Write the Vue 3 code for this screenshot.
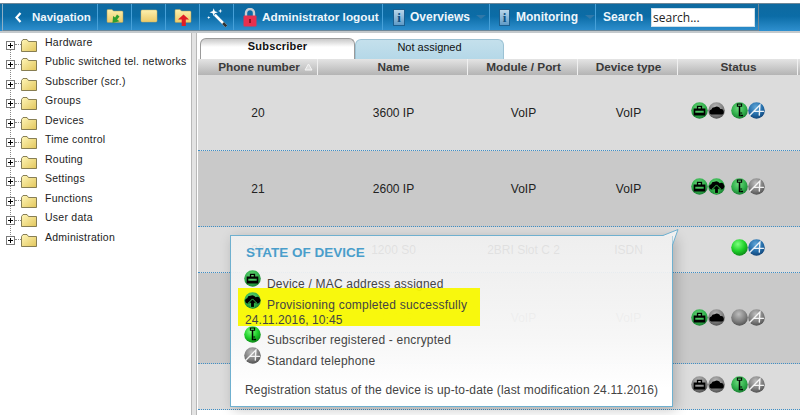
<script setup>
const tree = ['Hardware','Public switched tel. networks','Subscriber (scr.)','Groups','Devices','Time control','Routing','Settings','Functions','User data','Administration']

const columns = [
  { label: 'Phone number', cls: 'c-phone', sort: true },
  { label: 'Name', cls: 'c-name' },
  { label: 'Module / Port', cls: 'c-mod' },
  { label: 'Device type', cls: 'c-type' },
  { label: 'Status', cls: 'c-status' }
]

const rows = [
  { phone: '20', name: '3600 IP', mod: 'VoIP', type: 'VoIP', cls: 'r1', icons: [['green','case'],['grey','cloud'],['green','key'],['blue','phone']] },
  { phone: '21', name: '2600 IP', mod: 'VoIP', type: 'VoIP', cls: 'r2', icons: [['green','case'],['green','upload'],['green','key'],['grey','phone']] },
  { phone: '22', name: '1200 S0', mod: '2BRI Slot C 2', type: 'ISDN', cls: 'r3', icons: [null,null,['bright',''],['blue','phone']] },
  { phone: '', name: '1400 IP', mod: 'VoIP', type: 'VoIP', cls: 'r4', icons: [['green','case'],['grey','cloud'],['grey',''],['grey','phone']] },
  { phone: '', name: '', mod: '', type: '', cls: 'r5', icons: [['grey','case'],['grey','cloud'],['green','key'],['grey','phone']] }
]
</script>

<template>
  <div class="page">
    <svg width="0" height="0" class="defs">
      <defs>
        <radialGradient id="b-green" cx="45%" cy="35%" r="70%">
          <stop offset="0" stop-color="#6fdc7f"/><stop offset=".6" stop-color="#2fae4a"/><stop offset="1" stop-color="#17752f"/>
        </radialGradient>
        <radialGradient id="b-bright" cx="40%" cy="30%" r="75%">
          <stop offset="0" stop-color="#7dff7d"/><stop offset=".55" stop-color="#1fd02a"/><stop offset="1" stop-color="#0a8015"/>
        </radialGradient>
        <radialGradient id="b-grey" cx="45%" cy="30%" r="75%">
          <stop offset="0" stop-color="#bdbdbd"/><stop offset=".6" stop-color="#7e7e7e"/><stop offset="1" stop-color="#4a4a4a"/>
        </radialGradient>
        <radialGradient id="b-blue" cx="45%" cy="30%" r="75%">
          <stop offset="0" stop-color="#5fa6d8"/><stop offset=".6" stop-color="#226aa6"/><stop offset="1" stop-color="#123f70"/>
        </radialGradient>
        <linearGradient id="folder" x1="0" y1="0" x2="1" y2="1">
          <stop offset="0" stop-color="#fff6b8"/><stop offset="1" stop-color="#e2c65c"/>
        </linearGradient>
        <linearGradient id="tool-folder" x1="0" y1="0" x2="0" y2="1">
          <stop offset="0" stop-color="#fdf0ae"/><stop offset="1" stop-color="#ecca68"/>
        </linearGradient>
        <symbol id="g-case" viewBox="0 0 16 16">
          <path d="M2.500 6h3V3.500h5V6h3v6.800h-11z M6.800 4.600V6h2.400V4.600z M4 8.200v1.800h8V8.200z" fill="#000" fill-rule="evenodd"/>
        </symbol>
        <symbol id="g-cloud" viewBox="0 0 16 16">
          <path d="M3.200 11.800a2.400 2.400 0 0 1 0-4.700 3 3 0 0 1 3-2.100 3.500 3.500 0 0 1 5.400 1.700 2.600 2.600 0 0 1 1.200 5.100z" fill="#000"/>
        </symbol>
        <symbol id="g-upload" viewBox="0 0 16 16">
          <path d="M3 10.800a2.500 2.500 0 0 1 0-4.900 3 3 0 0 1 3-2.300 3.600 3.600 0 0 1 5 1.300 3 3 0 0 1 2.300 5.900z" fill="#000"/>
          <path d="M8 6.500 12 10.500H9.800V14.500H6.200V10.500H4z" fill="#000" stroke="#38c04c" stroke-width=".9"/>
        </symbol>
        <symbol id="g-key" viewBox="0 0 16 16">
          <path d="M5.500 1.500h5v3H8.700v9H7.300v-9H5.500z M6.500 2.400v1.200h3V2.400z" fill="#000" fill-rule="evenodd"/>
          <path d="M8.700 9.800h1.800v1h-1.800z M8.700 11.900h2.600v1.400H8.700z" fill="#000"/>
        </symbol>
        <symbol id="g-phone" viewBox="0 0 16 16">
          <path d="M1.500 12.800 11.200 2.800 10.600 12.800M5.500 8.800H15" fill="none" stroke="#fff" stroke-width="1.300" opacity=".9"/>
        </symbol>
      </defs>
    </svg>

    <nav class="toolbar">
      <div class="tools">
        <div class="tool nav-item">
          <svg width="7" height="11" viewBox="0 0 7 11"><path d="M5.500 1 1.500 5.500 5.500 10" fill="none" stroke="#fff" stroke-width="2.200"/></svg>
          <span>Navigation</span>
        </div>
        <div class="tool icon-item">
          <svg width="20" height="18" viewBox="0 0 20 18"><path d="M2 2.500q0-1 1-1h4l1.500 1.500h8.500q1 0 1 1v9.500q0 1-1 1H3q-1 0-1-1z" fill="url(#tool-folder)" stroke="#a99a5a" stroke-width=".5"/><path d="M12 6.500l2.500 2-2.400 3 2.400 1.800-7 1.700.6-7 2 1.500z" fill="#2f9e2f"/></svg>
        </div>
        <div class="tool icon-item">
          <svg width="20" height="18" viewBox="0 0 20 18"><rect x="2" y="2" width="16" height="12" rx="1.200" fill="url(#tool-folder)" stroke="#c9b56c" stroke-width=".5"/></svg>
        </div>
        <div class="tool icon-item">
          <svg width="20" height="18" viewBox="0 0 20 18"><path d="M2 2.500q0-1 1-1h4l1.500 1.500h8.500q1 0 1 1v9.500q0 1-1 1H3q-1 0-1-1z" fill="url(#tool-folder)" stroke="#a99a5a" stroke-width=".5"/><path d="M10.500 6.500l5.500 5h-3.200V18H8.700v-6.500H5z" fill="#e01b24"/></svg>
        </div>
        <div class="tool icon-item">
          <svg width="22" height="22" viewBox="0 0 20 20"><path d="M8 8 18.500 18.500" stroke="#fff" stroke-width="2.400"/><path d="M15.500 15.500 18.500 18.500" stroke="#333" stroke-width="2.400"/><path d="M7 2l1 2.700 2.800.9-2.800 1L7 9.300 6 6.600l-2.800-1 2.800-.9zM13 2.500l.5 1.500 1.500.5-1.500.5-.5 1.500-.5-1.500-1.500-.5 1.500-.5zM2.500 9l.4 1.100L4 10.500l-1.100.4-.4 1.100-.4-1.100L1 10.500l1.100-.4z" fill="#fff"/></svg>
        </div>
        <div class="tool logout">
          <svg width="14" height="19" viewBox="0 0 14 19"><path d="M3 8V5a4 4 0 0 1 8 0v3" fill="none" stroke="#c9ccd2" stroke-width="2.400"/><rect x=".5" y="7.500" width="13" height="11" rx="1" fill="#e6304f"/><rect x="6" y="11" width="2" height="4" fill="#8d1528"/></svg>
          <span>Administrator logout</span>
        </div>
        <div class="tool menu m-over">
          <span class="info">i</span><span>Overviews</span><i class="caret"></i>
        </div>
        <div class="tool menu m-mon">
          <span class="info">i</span><span>Monitoring</span><i class="caret"></i>
        </div>
        <div class="tool search">
          <span>Search</span>
          <input class="search-box" value="search..." />
        </div>
      </div>
    </nav>

    <div class="body">
      <aside class="sidebar">
        <ul class="tree">
          <li v-for="item in tree" :key="item" class="tree-row">
            <span class="plus"></span><span class="dash"></span>
            <svg class="folder" width="16" height="13" viewBox="0 0 16 13"><path d="M.5 12.500V2.500l1.500-2h4l1.500 2h8v10z" fill="url(#folder)" stroke="#6b6238" stroke-width=".8"/></svg>
            <span class="tree-label">{{ item }}</span>
          </li>
        </ul>
      </aside>
      <div class="splitter"></div>
      <main class="content">
        <div class="tabs">
          <div class="tab active">Subscriber</div>
          <div class="tab inactive">Not assigned</div>
        </div>
        <div class="thead">
          <div v-for="c in columns" :key="c.label" class="th" :class="[c.cls, { 'th-sort': c.sort }]">
            {{ c.label }}<svg v-if="c.sort" class="sort" width="9" height="8" viewBox="0 0 9 8"><path d="M4.500 1 8 7H1z" fill="#ddd" stroke="#f4f4f4" stroke-width="1"/></svg>
          </div>
        </div>
        <div v-for="(r, i) in rows" :key="i" class="row" :class="r.cls">
          <div class="td c-phone">{{ r.phone }}</div>
          <div class="td c-name">{{ r.name }}</div>
          <div class="td c-mod">{{ r.mod }}</div>
          <div class="td c-type">{{ r.type }}</div>
          <div class="td c-status">
            <div class="status">
              <div v-for="(ic, k) in r.icons" :key="k" class="slot" :class="{ 'slot-gap': k === 2 }">
                <svg v-if="ic" width="17" height="17" viewBox="0 0 16 16">
                  <circle cx="8" cy="8" r="7.800" :fill="`url(#b-${ic[0]})`"/>
                  <use v-if="ic[1]" :href="`#g-${ic[1]}`" width="16" height="16"/>
                </svg>
              </div>
            </div>
          </div>
        </div>
      </main>
    </div>

    <section class="pop">
      <svg class="tail" width="16" height="17" viewBox="0 0 16 17"><path d="M0 6.500 15 .5 9.500 16V7H0z" fill="#f0f0f0"/><path d="M0 6.500 15 .5 9.500 16" fill="none" stroke="#6fb0cf" stroke-width="1"/></svg>
      <h3 class="pop-title">STATE OF DEVICE</h3>
      <div class="pop-line">
        <svg width="17" height="17" viewBox="0 0 16 16"><circle cx="8" cy="8" r="7.800" fill="url(#b-green)"/><use href="#g-case" width="16" height="16"/></svg>
        <span>Device / MAC address assigned</span>
      </div>
      <div class="pop-line hl">
        <svg width="17" height="17" viewBox="0 0 16 16"><circle cx="8" cy="8" r="7.800" fill="url(#b-green)"/><use href="#g-upload" width="16" height="16"/></svg>
        <span>Provisioning completed successfully</span>
        <div class="hl-date">24.11.2016, 10:45</div>
      </div>
      <div class="pop-line">
        <svg width="17" height="17" viewBox="0 0 16 16"><circle cx="8" cy="8" r="7.800" fill="url(#b-bright)"/><use href="#g-key" width="16" height="16"/></svg>
        <span>Subscriber registered - encrypted</span>
      </div>
      <div class="pop-line">
        <svg width="17" height="17" viewBox="0 0 16 16"><circle cx="8" cy="8" r="7.800" fill="url(#b-grey)"/><use href="#g-phone" width="16" height="16"/></svg>
        <span>Standard telephone</span>
      </div>
      <p class="pop-note">Registration status of the device is up-to-date (last modification 24.11.2016)</p>
    </section>
  </div>
</template>

<style>
html, body { margin: 0; padding: 0; overflow: hidden; background: #fff; }
</style>

<style scoped>
.page {
  position: relative;
  width: 800px;
  height: 415px;
  overflow: hidden;
  background: #fff;
  font-family: "Liberation Sans", Arial, sans-serif;
  color: #222;
}
.defs { position: absolute; }

/* toolbar */
.toolbar {
  margin-top: 3px;
  height: 28px;
  display: flex;
  padding-left: 2px;
  background: linear-gradient(#0e6aa0 0%, #0b6ca6 45%, #2f90cf 100%);
  border-top: 1px solid #6d8798;
  box-sizing: border-box;
}
.tools {
  display: flex;
  height: 100%;
  border-left: 1px solid #8fb0c6;
  border-bottom: 1px solid #6d8798;
  box-sizing: border-box;
}
.tool {
  box-sizing: border-box;
  display: flex;
  align-items: center;
  border-right: 1px solid #46a0d8;
  color: #eef6fb;
  font-size: 12px;
  font-weight: bold;
  height: 100%;
  white-space: nowrap;
}
.nav-item { width: 95px; padding-left: 12px; gap: 10px; font-size: 11.500px; }
.icon-item { width: 34px; justify-content: center; }
.logout { width: 149px; padding-left: 9px; gap: 5px; font-size: 11.800px; }
.menu { padding-left: 10px; gap: 5px; }
.m-over { width: 107px; }
.m-mon { width: 106px; padding-left: 9px; gap: 6px; }
.info {
  box-sizing: border-box;
  width: 12px;
  height: 17px;
  background: linear-gradient(#b9d6ea, #5f9ac6);
  border: 1px solid #1c5f8f;
  color: #0b4f82;
  font: bold 13px/15px "Liberation Serif", serif;
  text-align: center;
}
.caret {
  width: 0;
  height: 0;
  border: 5px solid transparent;
  border-top: 4px solid #3078a8;
  border-bottom: 0;
  margin-left: 1px;
}
.search { width: 163px; padding-left: 7px; gap: 8px; border-right: 1px solid #6d8798; }
.search-box {
  box-sizing: border-box;
  width: 104px;
  height: 19px;
  border: 1px solid #cfe0ea;
  padding: 0 1px;
  background: #fff;
  color: #222;
  font: 12px "Open Sans", "DejaVu Sans", sans-serif;
  outline: none;
}

/* frame */
.body {
  display: flex;
  height: 384px;
  border-top: 2px solid #c4c9cc;
  box-sizing: border-box;
}
.sidebar {
  width: 191px;
  flex: none;
  padding-top: .5px;
  box-sizing: border-box;
}
.splitter {
  width: 6px;
  flex: none;
  background: #e3e3e3;
  border-left: 1px solid #b8b8b8;
  border-right: 1px solid #b8b8b8;
  box-sizing: border-box;
}
.tree {
  list-style: none;
  margin: 0;
  padding: 0;
  background-image: repeating-linear-gradient(#888 0 1px, transparent 1px 2px);
  background-repeat: no-repeat;
  background-position: 10px 10px;
  background-size: 1px 196px;
}
.tree-row {
  height: 19.500px;
  display: flex;
  align-items: center;
  position: relative;
  font-size: 10.500px;
  letter-spacing: .25px;
  color: #222;
}
.plus {
  box-sizing: border-box;
  width: 9px;
  height: 9px;
  margin: 4px 0 0 6px;
  border: 1px solid #7a7a7a;
  background:
    linear-gradient(#000, #000) center / 5px 1px no-repeat,
    linear-gradient(#000, #000) center / 1px 5px no-repeat,
    #fff;
}
.dash { width: 6px; height: 1px; margin-top: 4px; border-top: 1px dotted #888; }
.folder { margin: 4px 0 0 0; flex: none; }
.tree-label { margin: -3px 0 0 8px; }

/* table */
.content { flex: 1; min-width: 0; }
.tabs { display: flex; height: 26px; padding: 5px 0 0 3px; box-sizing: border-box; align-items: flex-end; }
.tab {
  box-sizing: border-box;
  text-align: center;
  font-size: 11px;
  color: #111;
  border-radius: 6px 6px 0 0;
}
.active {
  width: 155px;
  height: 21px;
  font-weight: bold;
  letter-spacing: .2px;
  border: 1px solid #9a9a9a;
  border-bottom: 0;
  background: linear-gradient(#c9c9c9, #fff 40%, #fff);
  line-height: 12px;
  padding-top: 1px;
}
.inactive {
  width: 149px;
  height: 20px;
  background: linear-gradient(#c4e0ec, #b5d8e8);
  border: 1px solid #9cc2d4;
  border-bottom: 0;
  line-height: 15px;
}
.thead { display: flex; height: 16px; margin-left: 1px; background: linear-gradient(#e4e4e4, #b4b4b4); }
.th {
  box-sizing: border-box;
  text-align: center;
  font-size: 11.800px;
  font-weight: bold;
  line-height: 16px;
  color: #3a3a3a;
  border-right: 1px solid #f0f0f0;
  padding-left: 2px;
  white-space: nowrap;
}
.th-sort { padding-left: 16px; letter-spacing: -.1px; }
.sort { margin-left: 4px; }
.c-phone { width: 120px; }
.c-name { width: 150px; }
.c-mod { width: 110px; }
.c-type { width: 100px; }
.c-status { width: 120px; }
.row {
  display: flex;
  margin-left: 1px;
  align-items: center;
  border-bottom: 1px dotted #3f8fc6;
  box-sizing: border-box;
}
.row .c-status { flex: 1; }
.row .c-name, .row .c-mod, .row .c-type { padding-left: 1px; box-sizing: border-box; }
.td { text-align: center; font-size: 12px; color: #222; }
.r1 { height: 76px; background: #dcdcdc; }
.r2 { height: 76px; background: #c9c9c9; }
.r3 { height: 46px; background: #dcdcdc; }
.r4 { height: 91px; background: #c9c9c9; }
.r5 { height: 46px; background: #dcdcdc; }
.status { display: flex; justify-content: flex-end; padding-right: 35px; margin-bottom: 4px; }
.r4 .status { margin-bottom: 1px; }
.slot { width: 17px; height: 17px; }
.slot-gap { margin-left: 6px; }
.slot svg { display: block; }

/* popover */
.pop {
  position: absolute;
  left: 230px;
  top: 235px;
  width: 443px;
  height: 172px;
  box-sizing: border-box;
  padding: 9px 15px 0;
  border: 1px solid #6fb0cf;
  background: linear-gradient(rgba(240,240,240,.91), rgba(248,248,248,.97) 60%, #fff 90%);
  box-shadow: 3px 3px 12px rgba(0,0,0,.22);
  color: #444;
  font-size: 12px;
  letter-spacing: .2px;
}
.tail { position: absolute; left: 432px; top: -7px; }
.pop-title { margin: 0 0 10px; font-size: 13.500px; line-height: 16px; color: #4a9ecb; letter-spacing: 0; }
.pop-line { position: relative; height: 21px; white-space: nowrap; }
.pop-line svg { position: absolute; left: -2px; top: -1px; }
.pop-line span { position: absolute; left: 21px; top: 6px; line-height: 14px; }
.hl {
  height: 38px;
  margin: -4px 0 1px -8px;
  width: 242px;
  background: rgba(248,248,0,.95);
  box-sizing: border-box;
}
.hl svg { left: 6px; top: 4px; }
.hl span { left: 29px; top: 10px; letter-spacing: .23px; }
.hl-date { position: absolute; left: 7px; top: 25px; line-height: 14px; letter-spacing: .1px; }
.pop-line:last-of-type span { top: 6px; }
.hl + .pop-line span { top: 6px; }
.pop-note { margin: 14px 0 0 -1px; line-height: 14px; white-space: nowrap; letter-spacing: .16px; }
</style>
